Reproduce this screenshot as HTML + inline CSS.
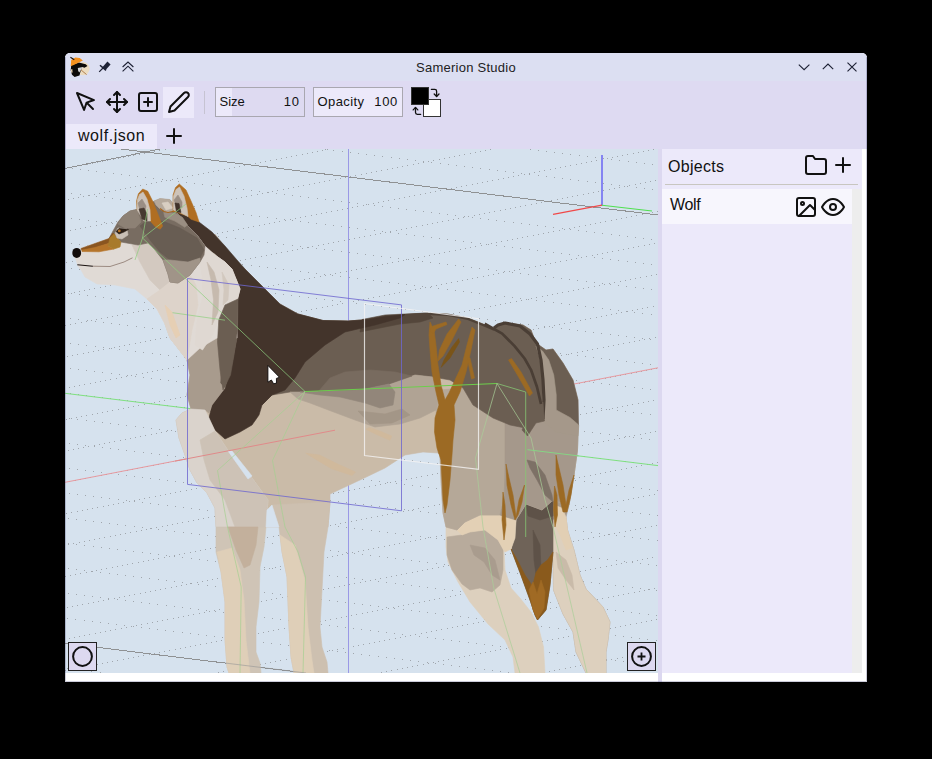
<!DOCTYPE html>
<html><head><meta charset="utf-8">
<style>
html,body{margin:0;padding:0;background:#000;}
body{width:932px;height:759px;position:relative;overflow:hidden;font-family:"Liberation Sans",sans-serif;color:#111;}
#win{position:absolute;left:65px;top:53px;width:802px;height:629px;background:#fff;border-radius:5px 5px 0 0;overflow:hidden;}
#title{position:absolute;left:0;top:0;width:802px;height:28px;background:#dcdff2;}
#tool{position:absolute;left:0;top:28px;width:802px;height:68px;background:#dedaf2;}
#ttext{position:absolute;left:0;width:802px;top:7px;text-align:center;font-size:13px;line-height:15px;color:#222;letter-spacing:0.25px;}
.abs{position:absolute;}
#vp{position:absolute;left:0;top:96px;width:593px;height:524px;background:#d6e2ee;overflow:hidden;}
#vp svg{position:absolute;left:0;top:0;}
#split{position:absolute;left:593px;top:96px;width:4px;height:533px;background:#dcd8f0;}
#panel{position:absolute;left:597px;top:96px;width:200px;height:524px;background:#ece9fa;}
#sbar{position:absolute;left:787px;top:136px;width:10px;height:484px;background:#ededed;}
#row{position:absolute;left:597px;top:136px;width:190px;height:35px;background:#f7f6fd;}
.ic{position:absolute;overflow:visible;}
</style></head><body>
<div id="win">
 <div id="title"></div>
 <div id="ttext">Samerion Studio</div>
 <div id="tool"></div>
 <div class="abs" style="left:98px;top:34px;width:31px;height:31px;background:#ece9fa"></div>
 <div class="abs" style="left:139px;top:38px;width:1px;height:23px;background:#c6c3d2"></div>
 <div class="abs" style="left:150px;top:34px;width:88px;height:28px;border:1px solid #a9a7b0;background:#dedaf1"><div class="abs" style="left:0;top:0;width:16px;height:28px;background:#ece9fa"></div>
   <span class="abs" style="left:3.5px;top:6px;font-size:13px;line-height:15px">Size</span><span class="abs" style="right:4px;top:6px;font-size:13px;line-height:15px;letter-spacing:0.9px">10</span></div>
 <div class="abs" style="left:248px;top:34px;width:88px;height:28px;border:1px solid #a9a7b0;background:#ece9fa">
   <span class="abs" style="left:3.5px;top:6px;font-size:13px;line-height:15px;letter-spacing:0.4px">Opacity</span><span class="abs" style="right:4px;top:6px;font-size:13px;line-height:15px;letter-spacing:0.7px">100</span></div>
 <div class="abs" style="left:358px;top:46px;width:16px;height:16px;border:1px solid #333;background:#fff"></div>
 <div class="abs" style="left:346px;top:34px;width:16px;height:16px;border:1px solid #333;background:#000"></div>
 <div class="abs" style="left:1px;top:71px;width:91px;height:25px;background:#ece9fa"></div>
 <div class="abs" style="left:13px;top:73px;font-size:16px;line-height:20px;letter-spacing:0.55px">wolf.json</div>
 <!-- app icon -->
 <svg class="ic" style="left:4px;top:3px" width="22" height="22" viewBox="69 56 22 22">
  <circle cx="83" cy="68.6" r="6.6" fill="#ecdcc0"/>
  <polygon points="71.2,65.2 78.9,62.6 85.7,64.3 87.5,66 84.5,67.7 82.3,66.9 80.6,71.2 79.5,75.5 74.6,76.9 72,74.8 70.7,70.3" fill="#0c0a08"/>
  <polygon points="70.7,66.2 71.2,60 75.4,57.4 79.7,57.9 82.9,60.6 78.9,62.4 73.7,64.9" fill="#f5921e"/>
  <polygon points="70.9,69.5 72.3,69 72.6,72.5 71.3,72.8" fill="#e8d5b8"/>
  <path d="M70.4 57.2 L74.3 59.7" stroke="#111" stroke-width="1.1"/>
  <polygon points="77.8,68 82.9,67 79.3,72.6 78.2,71" fill="#d4d4d4"/>
  <path d="M81 69.9 L86.6 74.6" stroke="#b08050" stroke-width="1"/>
 </svg>
 <!-- pin -->
 <svg class="ic" style="left:32px;top:6px" width="16" height="16" viewBox="97 59 16 16">
  <g stroke="#1e2235" fill="none" stroke-linecap="butt">
   <path d="M104 68.6 L109 63" stroke-width="4.2"/>
   <path d="M100 65.2 L106 70.4" stroke-width="1.5"/>
   <path d="M103 68 L99.2 71.8" stroke-width="1.2"/>
  </g>
 </svg>
 <!-- double chevron up -->
 <svg class="ic" style="left:56px;top:7px" width="14" height="14" viewBox="121 60 14 14">
  <g stroke="#1e2235" fill="none" stroke-width="1.15"><path d="M122.6 67 L128 62 L133.4 67"/><path d="M122.6 71.3 L128 66.2 L133.4 71.3"/></g>
 </svg>
 <!-- window buttons -->
 <svg class="ic" style="left:731px;top:7px" width="64" height="14" viewBox="796 60 64 14">
  <g stroke="#1e2235" fill="none" stroke-width="1.15"><path d="M798.8 64.6 L804.1 69.6 L809.4 64.6"/><path d="M822.8 69.2 L828 64.1 L833.2 69.2"/><path d="M847.5 62.6 L856.5 71.4 M856.5 62.6 L847.5 71.4"/></g>
 </svg>
 <!-- toolbar icons (24px lucide) -->
 <svg class="ic" style="left:8.5px;top:36.8px" width="24" height="24" viewBox="0 0 24 24" fill="none" stroke="#111" stroke-width="2" stroke-linecap="round" stroke-linejoin="round"><path d="M3 3l7.07 16.97 2.51-7.39 7.39-2.51L3 3z"/><path d="M13 13l6 6"/></svg>
 <svg class="ic" style="left:39.5px;top:36.8px" width="24" height="24" viewBox="0 0 24 24" fill="none" stroke="#111" stroke-width="2" stroke-linecap="round" stroke-linejoin="round"><polyline points="5 9 2 12 5 15"/><polyline points="9 5 12 2 15 5"/><polyline points="15 19 12 22 9 19"/><polyline points="19 9 22 12 19 15"/><line x1="2" y1="12" x2="22" y2="12"/><line x1="12" y1="2" x2="12" y2="22"/></svg>
 <svg class="ic" style="left:70.5px;top:36.8px" width="24" height="24" viewBox="0 0 24 24" fill="none" stroke="#111" stroke-width="2" stroke-linecap="round" stroke-linejoin="round"><rect x="3" y="3" width="18" height="18" rx="2" ry="2"/><line x1="12" y1="8" x2="12" y2="16"/><line x1="8" y1="12" x2="16" y2="12"/></svg>
 <svg class="ic" style="left:101.5px;top:36.8px" width="24" height="24" viewBox="0 0 24 24" fill="none" stroke="#111" stroke-width="2" stroke-linecap="round" stroke-linejoin="round"><path d="M17 3a2.828 2.828 0 1 1 4 4L7.5 20.5 2 22l1.5-5.5L17 3z"/></svg>
 <!-- swap arrows -->
 <svg class="ic" style="left:345px;top:33px" width="32" height="32" viewBox="410 86 32 32" fill="none" stroke="#111" stroke-width="1.3" stroke-linecap="round" stroke-linejoin="round">
  <path d="M431.4 89.4 H434.8 Q436.6 89.4 436.6 91.2 V96.3"/><path d="M434.2 94 L436.6 96.5 L439 94"/>
  <path d="M420.6 114.4 H417.3 Q415.5 114.4 415.5 112.6 V107.6"/><path d="M413.2 109.9 L415.5 107.4 L417.8 109.9"/>
 </svg>
 <!-- tab plus -->
 <svg class="ic" style="left:97px;top:70.5px" width="24" height="24" viewBox="0 0 24 24" fill="none" stroke="#111" stroke-width="2" stroke-linecap="round" stroke-linejoin="round"><line x1="12" y1="5" x2="12" y2="19"/><line x1="5" y1="12" x2="19" y2="12"/></svg>

 <div id="vp">
<svg width="593" height="524" viewBox="65 149 593 524">
<path d="M66 168.5h1m4-1h1m4-1h1m4-1h1m5-1h1m4-1h1m4-1h1m4-1h1m4-1h1m5-1h1m4-1h1m4-1h1m4-1h1m4-1h1m5-1h1m4-1h1m4-1h1m4-1h1m4-1h1m5-1h1M68 199.5h1m4-1h1m4-1h1m4-1h1m5-1h1m4-1h1m4-1h1m4-1h1m4-1h1m5-1h1m4-1h1m4-1h1m4-1h1m4-1h1m4-1h1m5-1h1m4-1h1m4-1h1m4-1h1m4-1h1m5-1h1m4-1h1m4-1h1m4-1h1m4-1h1m5-1h1m4-1h1m4-1h1m4-1h1m4-1h1m5-1h1m4-1h1m4-1h1m4-1h1m4-1h1m5-1h1m4-1h1m4-1h1m4-1h1m4-1h1m5-1h1m4-1h1m4-1h1m4-1h1m4-1h1m5-1h1m4-1h1m4-1h1m4-1h1m4-1h1m4-1h1M70 230.5h1m4-1h1m4-1h1m4-1h1m4-1h1m5-1h1m4-1h1m4-1h1m4-1h1m4-1h1m5-1h1m4-1h1m4-1h1m4-1h1m4-1h1m5-1h1m4-1h1m4-1h1m4-1h1m4-1h1m5-1h1m4-1h1m4-1h1m4-1h1m4-1h1m5-1h1m4-1h1m4-1h1m4-1h1m4-1h1m5-1h1m4-1h1m4-1h1m4-1h1m4-1h1m4-1h1m5-1h1m4-1h1m4-1h1m4-1h1m4-1h1m5-1h1m4-1h1m4-1h1m4-1h1m4-1h1m5-1h1m4-1h1m4-1h1m4-1h1m4-1h1m5-1h1m4-1h1m4-1h1m4-1h1m4-1h1m5-1h1m4-1h1m4-1h1m4-1h1m4-1h1m5-1h1m4-1h1m4-1h1m4-1h1m4-1h1m5-1h1m4-1h1m4-1h1m4-1h1m4-1h1m5-1h1m4-1h1m4-1h1m4-1h1m4-1h1m4-1h1m5-1h1m4-1h1m4-1h1m4-1h1m4-1h1M66 262.5h1m5-1h1m4-1h1m4-1h1m4-1h1m4-1h1m5-1h1m4-1h1m4-1h1m4-1h1m4-1h1m5-1h1m4-1h1m4-1h1m4-1h1m4-1h1m5-1h1m4-1h1m4-1h1m4-1h1m4-1h1m4-1h1m5-1h1m4-1h1m4-1h1m4-1h1m4-1h1m5-1h1m4-1h1m4-1h1m4-1h1m4-1h1m5-1h1m4-1h1m4-1h1m4-1h1m4-1h1m5-1h1m4-1h1m4-1h1m4-1h1m4-1h1m5-1h1m4-1h1m4-1h1m4-1h1m4-1h1m5-1h1m4-1h1m4-1h1m4-1h1m4-1h1m5-1h1m4-1h1m4-1h1m4-1h1m4-1h1m5-1h1m4-1h1m4-1h1m4-1h1m4-1h1m4-1h1m5-1h1m4-1h1m4-1h1m4-1h1m4-1h1m5-1h1m4-1h1m4-1h1m4-1h1m4-1h1m5-1h1m4-1h1m4-1h1m4-1h1m4-1h1m5-1h1m4-1h1m4-1h1m4-1h1m4-1h1m5-1h1m4-1h1m4-1h1m4-1h1m4-1h1m5-1h1m4-1h1m4-1h1m4-1h1m4-1h1m5-1h1m4-1h1m4-1h1m4-1h1m4-1h1m5-1h1m4-1h1m4-1h1m4-1h1m4-1h1m4-1h1m5-1h1m4-1h1m4-1h1m4-1h1m4-1h1m5-1h1m4-1h1m4-1h1m4-1h1m4-1h1M68 293.5h1m5-1h1m4-1h1m4-1h1m4-1h1m4-1h1m5-1h1m4-1h1m4-1h1m4-1h1m4-1h1m4-1h1m5-1h1m4-1h1m4-1h1m4-1h1m4-1h1m5-1h1m4-1h1m4-1h1m4-1h1m4-1h1m5-1h1m4-1h1m4-1h1m4-1h1m4-1h1m5-1h1m4-1h1m4-1h1m4-1h1m4-1h1m5-1h1m4-1h1m4-1h1m4-1h1m4-1h1m5-1h1m4-1h1m4-1h1m4-1h1m4-1h1m5-1h1m4-1h1m4-1h1m4-1h1m4-1h1m4-1h1m5-1h1m4-1h1m4-1h1m4-1h1m4-1h1m5-1h1m4-1h1m4-1h1m4-1h1m4-1h1m5-1h1m4-1h1m4-1h1m4-1h1m4-1h1m5-1h1m4-1h1m4-1h1m4-1h1m4-1h1m5-1h1m4-1h1m4-1h1m4-1h1m4-1h1m5-1h1m4-1h1m4-1h1m4-1h1m4-1h1m5-1h1m4-1h1m4-1h1m4-1h1m4-1h1m5-1h1m4-1h1m4-1h1m4-1h1m4-1h1m4-1h1m5-1h1m4-1h1m4-1h1m4-1h1m4-1h1m5-1h1m4-1h1m4-1h1m4-1h1m4-1h1m5-1h1m4-1h1m4-1h1m4-1h1m4-1h1m5-1h1m4-1h1m4-1h1m4-1h1m4-1h1m5-1h1m4-1h1m4-1h1m4-1h1m4-1h1M65 325.5h1m4-1h1m4-1h1m5-1h1m4-1h1m4-1h1m4-1h1m4-1h1m5-1h1m4-1h1m4-1h1m4-1h1m4-1h1m5-1h1m4-1h1m4-1h1m4-1h1m4-1h1m5-1h1m4-1h1m4-1h1m4-1h1m4-1h1m5-1h1m4-1h1m4-1h1m4-1h1m4-1h1m5-1h1m4-1h1m4-1h1m4-1h1m4-1h1m4-1h1m5-1h1m4-1h1m4-1h1m4-1h1m4-1h1m5-1h1m4-1h1m4-1h1m4-1h1m4-1h1m5-1h1m4-1h1m4-1h1m4-1h1m4-1h1m5-1h1m4-1h1m4-1h1m4-1h1m4-1h1m5-1h1m4-1h1m4-1h1m4-1h1m4-1h1m5-1h1m4-1h1m4-1h1m4-1h1m4-1h1m5-1h1m4-1h1m4-1h1m4-1h1m4-1h1m5-1h1m4-1h1m4-1h1m4-1h1m4-1h1m4-1h1m5-1h1m4-1h1m4-1h1m4-1h1m4-1h1m5-1h1m4-1h1m4-1h1m4-1h1m4-1h1m5-1h1m4-1h1m4-1h1m4-1h1m4-1h1m5-1h1m4-1h1m4-1h1m4-1h1m4-1h1m5-1h1m4-1h1m4-1h1m4-1h1m4-1h1m5-1h1m4-1h1m4-1h1m4-1h1m4-1h1m5-1h1m4-1h1m4-1h1m4-1h1m4-1h1m4-1h1m5-1h1m4-1h1m4-1h1m4-1h1M67 356.5h1m4-1h1m4-1h1m5-1h1m4-1h1m4-1h1m4-1h1m4-1h1m5-1h1m4-1h1m4-1h1m4-1h1m4-1h1m5-1h1m4-1h1m4-1h1m4-1h1m4-1h1m4-1h1m5-1h1m4-1h1m4-1h1m4-1h1m4-1h1m5-1h1m4-1h1m4-1h1m4-1h1m4-1h1m5-1h1m4-1h1m4-1h1m4-1h1m4-1h1m5-1h1m4-1h1m4-1h1m4-1h1m4-1h1m5-1h1m4-1h1m4-1h1m4-1h1m4-1h1m5-1h1m4-1h1m4-1h1m4-1h1m4-1h1m5-1h1m4-1h1m4-1h1m4-1h1m4-1h1m5-1h1m4-1h1m4-1h1m4-1h1m4-1h1m4-1h1m5-1h1m4-1h1m4-1h1m4-1h1m4-1h1m5-1h1m4-1h1m4-1h1m4-1h1m4-1h1m5-1h1m4-1h1m4-1h1m4-1h1m4-1h1m5-1h1m4-1h1m4-1h1m4-1h1m4-1h1m5-1h1m4-1h1m4-1h1m4-1h1m4-1h1m5-1h1m4-1h1m4-1h1m4-1h1m4-1h1m5-1h1m4-1h1m4-1h1m4-1h1m4-1h1m4-1h1m5-1h1m4-1h1m4-1h1m4-1h1m4-1h1m5-1h1m4-1h1m4-1h1m4-1h1m4-1h1m5-1h1m4-1h1m4-1h1m4-1h1m4-1h1m5-1h1m4-1h1m4-1h1M69 387.5h1m4-1h1m4-1h1m4-1h1m5-1h1m4-1h1m4-1h1m4-1h1m4-1h1m5-1h1m4-1h1m4-1h1m4-1h1m4-1h1m5-1h1m4-1h1m4-1h1m4-1h1m4-1h1m5-1h1m4-1h1m4-1h1m4-1h1m4-1h1m5-1h1m4-1h1m4-1h1m4-1h1m4-1h1m5-1h1m4-1h1m4-1h1m4-1h1m4-1h1m5-1h1m4-1h1m4-1h1m4-1h1m4-1h1m5-1h1m4-1h1m4-1h1m4-1h1m4-1h1m4-1h1m5-1h1m4-1h1m4-1h1m4-1h1m4-1h1m5-1h1m4-1h1m4-1h1m4-1h1m4-1h1m5-1h1m4-1h1m4-1h1m4-1h1m4-1h1m5-1h1m4-1h1m4-1h1m4-1h1m4-1h1m5-1h1m4-1h1m4-1h1m4-1h1m4-1h1m5-1h1m4-1h1m4-1h1m4-1h1m4-1h1m5-1h1m4-1h1m4-1h1m4-1h1m4-1h1m4-1h1m5-1h1m4-1h1m4-1h1m4-1h1m4-1h1m5-1h1m4-1h1m4-1h1m4-1h1m4-1h1m5-1h1m4-1h1m4-1h1m4-1h1m4-1h1m5-1h1m4-1h1m4-1h1m4-1h1m4-1h1m5-1h1m4-1h1m4-1h1m4-1h1m4-1h1m5-1h1m4-1h1m4-1h1m4-1h1m4-1h1m5-1h1m4-1h1m4-1h1M66 419.5h1m4-1h1m4-1h1m4-1h1m4-1h1m5-1h1m4-1h1m4-1h1m4-1h1m4-1h1m5-1h1m4-1h1m4-1h1m4-1h1m4-1h1m5-1h1m4-1h1m4-1h1m4-1h1m4-1h1m5-1h1m4-1h1m4-1h1m4-1h1m4-1h1m5-1h1m4-1h1m4-1h1m4-1h1m4-1h1m4-1h1m5-1h1m4-1h1m4-1h1m4-1h1m4-1h1m5-1h1m4-1h1m4-1h1m4-1h1m4-1h1m5-1h1m4-1h1m4-1h1m4-1h1m4-1h1m5-1h1m4-1h1m4-1h1m4-1h1m4-1h1m5-1h1m4-1h1m4-1h1m4-1h1m4-1h1m5-1h1m4-1h1m4-1h1m4-1h1m4-1h1m5-1h1m4-1h1m4-1h1m4-1h1m4-1h1m4-1h1m5-1h1m4-1h1m4-1h1m4-1h1m4-1h1m5-1h1m4-1h1m4-1h1m4-1h1m4-1h1m5-1h1m4-1h1m4-1h1m4-1h1m4-1h1m5-1h1m4-1h1m4-1h1m4-1h1m4-1h1m5-1h1m4-1h1m4-1h1m4-1h1m4-1h1m5-1h1m4-1h1m4-1h1m4-1h1m4-1h1m5-1h1m4-1h1m4-1h1m4-1h1m4-1h1m5-1h1m4-1h1m4-1h1m4-1h1m4-1h1m4-1h1m5-1h1m4-1h1m4-1h1m4-1h1m4-1h1m5-1h1M68 450.5h1m4-1h1m4-1h1m4-1h1m4-1h1m5-1h1m4-1h1m4-1h1m4-1h1m4-1h1m5-1h1m4-1h1m4-1h1m4-1h1m4-1h1m4-1h1m5-1h1m4-1h1m4-1h1m4-1h1m4-1h1m5-1h1m4-1h1m4-1h1m4-1h1m4-1h1m5-1h1m4-1h1m4-1h1m4-1h1m4-1h1m5-1h1m4-1h1m4-1h1m4-1h1m4-1h1m5-1h1m4-1h1m4-1h1m4-1h1m4-1h1m5-1h1m4-1h1m4-1h1m4-1h1m4-1h1m5-1h1m4-1h1m4-1h1m4-1h1m4-1h1m4-1h1m5-1h1m4-1h1m4-1h1m4-1h1m4-1h1m5-1h1m4-1h1m4-1h1m4-1h1m4-1h1m5-1h1m4-1h1m4-1h1m4-1h1m4-1h1m5-1h1m4-1h1m4-1h1m4-1h1m4-1h1m5-1h1m4-1h1m4-1h1m4-1h1m4-1h1m5-1h1m4-1h1m4-1h1m4-1h1m4-1h1m5-1h1m4-1h1m4-1h1m4-1h1m4-1h1m5-1h1m4-1h1m4-1h1m4-1h1m4-1h1m4-1h1m5-1h1m4-1h1m4-1h1m4-1h1m4-1h1m5-1h1m4-1h1m4-1h1m4-1h1m4-1h1m5-1h1m4-1h1m4-1h1m4-1h1m4-1h1m5-1h1m4-1h1m4-1h1m4-1h1m4-1h1m5-1h1M69 481.5h1m5-1h1m4-1h1m4-1h1m4-1h1m4-1h1m5-1h1m4-1h1m4-1h1m4-1h1m4-1h1m5-1h1m4-1h1m4-1h1m4-1h1m4-1h1m5-1h1m4-1h1m4-1h1m4-1h1m4-1h1m5-1h1m4-1h1m4-1h1m4-1h1m4-1h1m5-1h1m4-1h1m4-1h1m4-1h1m4-1h1m5-1h1m4-1h1m4-1h1m4-1h1m4-1h1m4-1h1m5-1h1m4-1h1m4-1h1m4-1h1m4-1h1m5-1h1m4-1h1m4-1h1m4-1h1m4-1h1m5-1h1m4-1h1m4-1h1m4-1h1m4-1h1m5-1h1m4-1h1m4-1h1m4-1h1m4-1h1m5-1h1m4-1h1m4-1h1m4-1h1m4-1h1m5-1h1m4-1h1m4-1h1m4-1h1m4-1h1m5-1h1m4-1h1m4-1h1m4-1h1m4-1h1m5-1h1m4-1h1m4-1h1m4-1h1m4-1h1m4-1h1m5-1h1m4-1h1m4-1h1m4-1h1m4-1h1m5-1h1m4-1h1m4-1h1m4-1h1m4-1h1m5-1h1m4-1h1m4-1h1m4-1h1m4-1h1m5-1h1m4-1h1m4-1h1m4-1h1m4-1h1m5-1h1m4-1h1m4-1h1m4-1h1m4-1h1m5-1h1m4-1h1m4-1h1m4-1h1m4-1h1m5-1h1m4-1h1m4-1h1m4-1h1m4-1h1m4-1h1M66 513.5h1m4-1h1m5-1h1m4-1h1m4-1h1m4-1h1m4-1h1m5-1h1m4-1h1m4-1h1m4-1h1m4-1h1m5-1h1m4-1h1m4-1h1m4-1h1m4-1h1m5-1h1m4-1h1m4-1h1m4-1h1m4-1h1m4-1h1m5-1h1m4-1h1m4-1h1m4-1h1m4-1h1m5-1h1m4-1h1m4-1h1m4-1h1m4-1h1m5-1h1m4-1h1m4-1h1m4-1h1m4-1h1m5-1h1m4-1h1m4-1h1m4-1h1m4-1h1m5-1h1m4-1h1m4-1h1m4-1h1m4-1h1m5-1h1m4-1h1m4-1h1m4-1h1m4-1h1m5-1h1m4-1h1m4-1h1m4-1h1m4-1h1m5-1h1m4-1h1m4-1h1m4-1h1m4-1h1m4-1h1m5-1h1m4-1h1m4-1h1m4-1h1m4-1h1m5-1h1m4-1h1m4-1h1m4-1h1m4-1h1m5-1h1m4-1h1m4-1h1m4-1h1m4-1h1m5-1h1m4-1h1m4-1h1m4-1h1m4-1h1m5-1h1m4-1h1m4-1h1m4-1h1m4-1h1m5-1h1m4-1h1m4-1h1m4-1h1m4-1h1m5-1h1m4-1h1m4-1h1m4-1h1m4-1h1m4-1h1m5-1h1m4-1h1m4-1h1m4-1h1m4-1h1m5-1h1m4-1h1m4-1h1m4-1h1m4-1h1m5-1h1m4-1h1m4-1h1m4-1h1M68 544.5h1m4-1h1m5-1h1m4-1h1m4-1h1m4-1h1m4-1h1m4-1h1m5-1h1m4-1h1m4-1h1m4-1h1m4-1h1m5-1h1m4-1h1m4-1h1m4-1h1m4-1h1m5-1h1m4-1h1m4-1h1m4-1h1m4-1h1m5-1h1m4-1h1m4-1h1m4-1h1m4-1h1m5-1h1m4-1h1m4-1h1m4-1h1m4-1h1m5-1h1m4-1h1m4-1h1m4-1h1m4-1h1m5-1h1m4-1h1m4-1h1m4-1h1m4-1h1m5-1h1m4-1h1m4-1h1m4-1h1m4-1h1m4-1h1m5-1h1m4-1h1m4-1h1m4-1h1m4-1h1m5-1h1m4-1h1m4-1h1m4-1h1m4-1h1m5-1h1m4-1h1m4-1h1m4-1h1m4-1h1m5-1h1m4-1h1m4-1h1m4-1h1m4-1h1m5-1h1m4-1h1m4-1h1m4-1h1m4-1h1m5-1h1m4-1h1m4-1h1m4-1h1m4-1h1m5-1h1m4-1h1m4-1h1m4-1h1m4-1h1m4-1h1m5-1h1m4-1h1m4-1h1m4-1h1m4-1h1m5-1h1m4-1h1m4-1h1m4-1h1m4-1h1m5-1h1m4-1h1m4-1h1m4-1h1m4-1h1m5-1h1m4-1h1m4-1h1m4-1h1m4-1h1m5-1h1m4-1h1m4-1h1m4-1h1m4-1h1m5-1h1m4-1h1m4-1h1m4-1h1M65 576.5h1m4-1h1m4-1h1m4-1h1m5-1h1m4-1h1m4-1h1m4-1h1m4-1h1m5-1h1m4-1h1m4-1h1m4-1h1m4-1h1m5-1h1m4-1h1m4-1h1m4-1h1m4-1h1m5-1h1m4-1h1m4-1h1m4-1h1m4-1h1m5-1h1m4-1h1m4-1h1m4-1h1m4-1h1m4-1h1m5-1h1m4-1h1m4-1h1m4-1h1m4-1h1m5-1h1m4-1h1m4-1h1m4-1h1m4-1h1m5-1h1m4-1h1m4-1h1m4-1h1m4-1h1m5-1h1m4-1h1m4-1h1m4-1h1m4-1h1m5-1h1m4-1h1m4-1h1m4-1h1m4-1h1m5-1h1m4-1h1m4-1h1m4-1h1m4-1h1m5-1h1m4-1h1m4-1h1m4-1h1m4-1h1m5-1h1m4-1h1m4-1h1m4-1h1m4-1h1m4-1h1m5-1h1m4-1h1m4-1h1m4-1h1m4-1h1m5-1h1m4-1h1m4-1h1m4-1h1m4-1h1m5-1h1m4-1h1m4-1h1m4-1h1m4-1h1m5-1h1m4-1h1m4-1h1m4-1h1m4-1h1m5-1h1m4-1h1m4-1h1m4-1h1m4-1h1m5-1h1m4-1h1m4-1h1m4-1h1m4-1h1m5-1h1m4-1h1m4-1h1m4-1h1m4-1h1m4-1h1m5-1h1m4-1h1m4-1h1m4-1h1m4-1h1m5-1h1m4-1h1m4-1h1M67 607.5h1m4-1h1m4-1h1m4-1h1m5-1h1m4-1h1m4-1h1m4-1h1m4-1h1m5-1h1m4-1h1m4-1h1m4-1h1m4-1h1m5-1h1m4-1h1m4-1h1m4-1h1m4-1h1m4-1h1m5-1h1m4-1h1m4-1h1m4-1h1m4-1h1m5-1h1m4-1h1m4-1h1m4-1h1m4-1h1m5-1h1m4-1h1m4-1h1m4-1h1m4-1h1m5-1h1m4-1h1m4-1h1m4-1h1m4-1h1m5-1h1m4-1h1m4-1h1m4-1h1m4-1h1m5-1h1m4-1h1m4-1h1m4-1h1m4-1h1m5-1h1m4-1h1m4-1h1m4-1h1m4-1h1m4-1h1m5-1h1m4-1h1m4-1h1m4-1h1m4-1h1m5-1h1m4-1h1m4-1h1m4-1h1m4-1h1m5-1h1m4-1h1m4-1h1m4-1h1m4-1h1m5-1h1m4-1h1m4-1h1m4-1h1m4-1h1m5-1h1m4-1h1m4-1h1m4-1h1m4-1h1m5-1h1m4-1h1m4-1h1m4-1h1m4-1h1m5-1h1m4-1h1m4-1h1m4-1h1m4-1h1m5-1h1m4-1h1m4-1h1m4-1h1m4-1h1m4-1h1m5-1h1m4-1h1m4-1h1m4-1h1m4-1h1m5-1h1m4-1h1m4-1h1m4-1h1m4-1h1m5-1h1m4-1h1m4-1h1m4-1h1m4-1h1m5-1h1m4-1h1M69 638.5h1m4-1h1m4-1h1m4-1h1m4-1h1m5-1h1m4-1h1m4-1h1m4-1h1m4-1h1m5-1h1m4-1h1m4-1h1m4-1h1m4-1h1m5-1h1m4-1h1m4-1h1m4-1h1m4-1h1m5-1h1m4-1h1m4-1h1m4-1h1m4-1h1m5-1h1m4-1h1m4-1h1m4-1h1m4-1h1m5-1h1m4-1h1m4-1h1m4-1h1m4-1h1m5-1h1m4-1h1m4-1h1m4-1h1m4-1h1m4-1h1m5-1h1m4-1h1m4-1h1m4-1h1m4-1h1m5-1h1m4-1h1m4-1h1m4-1h1m4-1h1m5-1h1m4-1h1m4-1h1m4-1h1m4-1h1m5-1h1m4-1h1m4-1h1m4-1h1m4-1h1m5-1h1m4-1h1m4-1h1m4-1h1m4-1h1m5-1h1m4-1h1m4-1h1m4-1h1m4-1h1m5-1h1m4-1h1m4-1h1m4-1h1m4-1h1m4-1h1m5-1h1m4-1h1m4-1h1m4-1h1m4-1h1m5-1h1m4-1h1m4-1h1m4-1h1m4-1h1m5-1h1m4-1h1m4-1h1m4-1h1m4-1h1m5-1h1m4-1h1m4-1h1m4-1h1m4-1h1m5-1h1m4-1h1m4-1h1m4-1h1m4-1h1m5-1h1m4-1h1m4-1h1m4-1h1m4-1h1m5-1h1m4-1h1m4-1h1m4-1h1m4-1h1m5-1h1m4-1h1M65 670.5h1m5-1h1m4-1h1m4-1h1m4-1h1m4-1h1m5-1h1m4-1h1m4-1h1m4-1h1m4-1h1m5-1h1m4-1h1m4-1h1m4-1h1m4-1h1m5-1h1m4-1h1m4-1h1m4-1h1m4-1h1m5-1h1m4-1h1m4-1h1m4-1h1m4-1h1m4-1h1m5-1h1m4-1h1m4-1h1m4-1h1m4-1h1m5-1h1m4-1h1m4-1h1m4-1h1m4-1h1m5-1h1m4-1h1m4-1h1m4-1h1m4-1h1m5-1h1m4-1h1m4-1h1m4-1h1m4-1h1m5-1h1m4-1h1m4-1h1m4-1h1m4-1h1m5-1h1m4-1h1m4-1h1m4-1h1m4-1h1m5-1h1m4-1h1m4-1h1m4-1h1m4-1h1m5-1h1m4-1h1m4-1h1m4-1h1m4-1h1m4-1h1m5-1h1m4-1h1m4-1h1m4-1h1m4-1h1m5-1h1m4-1h1m4-1h1m4-1h1m4-1h1m5-1h1m4-1h1m4-1h1m4-1h1m4-1h1m5-1h1m4-1h1m4-1h1m4-1h1m4-1h1m5-1h1m4-1h1m4-1h1m4-1h1m4-1h1m5-1h1m4-1h1m4-1h1m4-1h1m4-1h1m5-1h1m4-1h1m4-1h1m4-1h1m4-1h1m4-1h1m5-1h1m4-1h1m4-1h1m4-1h1m4-1h1m5-1h1m4-1h1m4-1h1m4-1h1m4-1h1M218 672.5h1m4-1h1m4-1h1m5-1h1m4-1h1m4-1h1m4-1h1m4-1h1m5-1h1m4-1h1m4-1h1m4-1h1m4-1h1m5-1h1m4-1h1m4-1h1m4-1h1m4-1h1m4-1h1m5-1h1m4-1h1m4-1h1m4-1h1m4-1h1m5-1h1m4-1h1m4-1h1m4-1h1m4-1h1m5-1h1m4-1h1m4-1h1m4-1h1m4-1h1m5-1h1m4-1h1m4-1h1m4-1h1m4-1h1m5-1h1m4-1h1m4-1h1m4-1h1m4-1h1m5-1h1m4-1h1m4-1h1m4-1h1m4-1h1m5-1h1m4-1h1m4-1h1m4-1h1m4-1h1m5-1h1m4-1h1m4-1h1m4-1h1m4-1h1m4-1h1m5-1h1m4-1h1m4-1h1m4-1h1m4-1h1m5-1h1m4-1h1m4-1h1m4-1h1m4-1h1m5-1h1m4-1h1m4-1h1m4-1h1m4-1h1m5-1h1m4-1h1m4-1h1m4-1h1m4-1h1m5-1h1m4-1h1m4-1h1m4-1h1m4-1h1M381 672.5h1m4-1h1m4-1h1m5-1h1m4-1h1m4-1h1m4-1h1m4-1h1m5-1h1m4-1h1m4-1h1m4-1h1m4-1h1m4-1h1m5-1h1m4-1h1m4-1h1m4-1h1m4-1h1m5-1h1m4-1h1m4-1h1m4-1h1m4-1h1m5-1h1m4-1h1m4-1h1m4-1h1m4-1h1m5-1h1m4-1h1m4-1h1m4-1h1m4-1h1m5-1h1m4-1h1m4-1h1m4-1h1m4-1h1m5-1h1m4-1h1m4-1h1m4-1h1m4-1h1m5-1h1m4-1h1m4-1h1m4-1h1m4-1h1m5-1h1m4-1h1m4-1h1m4-1h1m4-1h1M544 672.5h1m4-1h1m4-1h1m4-1h1m5-1h1m4-1h1m4-1h1m4-1h1m4-1h1m5-1h1m4-1h1m4-1h1m4-1h1m4-1h1m5-1h1m4-1h1m4-1h1m4-1h1m4-1h1m5-1h1m4-1h1m4-1h1M530 149.5h1m7 1h1m7 1h1m7 1h1m7 1h1m7 1h1m8 1h1m7 1h1m7 1h1m7 1h1m7 1h1m7 1h1m8 1h1m7 1h1m7 1h1m7 1h1M325 149.5h1m7 1h1m8 1h1m7 1h1m7 1h1m7 1h1m7 1h1m7 1h1m8 1h1m7 1h1m7 1h1m7 1h1m7 1h1m7 1h1m8 1h1m7 1h1m7 1h1m7 1h1m7 1h1m7 1h1m8 1h1m7 1h1m7 1h1m7 1h1m7 1h1m7 1h1m8 1h1m7 1h1m7 1h1m7 1h1m7 1h1m7 1h1m8 1h1m7 1h1m7 1h1m7 1h1m7 1h1m7 1h1m8 1h1m7 1h1m7 1h1M121 149.5h1m7 1h1m7 1h1m7 1h1m8 1h1m7 1h1m7 1h1m7 1h1m7 1h1m7 1h1m8 1h1m7 1h1m7 1h1m7 1h1m7 1h1m7 1h1m8 1h1m7 1h1m7 1h1m7 1h1m7 1h1m7 1h1m8 1h1m7 1h1m7 1h1m7 1h1m7 1h1m7 1h1m8 1h1m7 1h1m7 1h1m7 1h1m7 1h1m7 1h1m8 1h1m7 1h1m7 1h1m7 1h1m7 1h1m7 1h1m7 1h1m8 1h1m7 1h1m7 1h1m7 1h1m7 1h1m7 1h1m8 1h1m7 1h1m7 1h1m7 1h1m7 1h1m7 1h1m8 1h1m7 1h1m7 1h1m7 1h1m7 1h1m7 1h1m8 1h1m7 1h1m7 1h1m7 1h1m7 1h1m7 1h1m8 1h1M72 168.5h1m7 1h1m7 1h1m7 1h1m7 1h1m8 1h1m7 1h1m7 1h1m7 1h1m7 1h1m7 1h1m8 1h1m7 1h1m7 1h1m7 1h1m7 1h1m7 1h1m8 1h1m7 1h1m7 1h1m7 1h1m7 1h1m7 1h1m7 1h1m8 1h1m7 1h1m7 1h1m7 1h1m7 1h1m7 1h1m8 1h1m7 1h1m7 1h1m7 1h1m7 1h1m7 1h1m8 1h1m7 1h1m7 1h1m7 1h1m7 1h1m7 1h1m8 1h1m7 1h1m7 1h1m7 1h1m7 1h1m7 1h1m8 1h1m7 1h1m7 1h1m7 1h1m7 1h1m7 1h1m8 1h1m7 1h1m7 1h1m7 1h1m7 1h1m7 1h1m8 1h1m7 1h1m7 1h1m7 1h1m7 1h1m7 1h1m8 1h1m7 1h1m7 1h1m7 1h1m7 1h1m7 1h1M71 193.5h1m8 1h1m7 1h1m7 1h1m7 1h1m7 1h1m7 1h1m8 1h1m7 1h1m7 1h1m7 1h1m7 1h1m7 1h1m8 1h1m7 1h1m7 1h1m7 1h1m7 1h1m7 1h1m8 1h1m7 1h1m7 1h1m7 1h1m7 1h1m7 1h1m8 1h1m7 1h1m7 1h1m7 1h1m7 1h1m7 1h1m8 1h1m7 1h1m7 1h1m7 1h1m7 1h1m7 1h1m8 1h1m7 1h1m7 1h1m7 1h1m7 1h1m7 1h1m8 1h1m7 1h1m7 1h1m7 1h1m7 1h1m7 1h1m7 1h1m8 1h1m7 1h1m7 1h1m7 1h1m7 1h1m7 1h1m8 1h1m7 1h1m7 1h1m7 1h1m7 1h1m7 1h1m8 1h1m7 1h1m7 1h1m7 1h1m7 1h1m7 1h1m8 1h1m7 1h1m7 1h1m7 1h1M71 218.5h1m7 1h1m8 1h1m7 1h1m7 1h1m7 1h1m7 1h1m7 1h1m8 1h1m7 1h1m7 1h1m7 1h1m7 1h1m7 1h1m8 1h1m7 1h1m7 1h1m7 1h1m7 1h1m7 1h1m8 1h1m7 1h1m7 1h1m7 1h1m7 1h1m7 1h1m7 1h1m8 1h1m7 1h1m7 1h1m7 1h1m7 1h1m7 1h1m8 1h1m7 1h1m7 1h1m7 1h1m7 1h1m7 1h1m8 1h1m7 1h1m7 1h1m7 1h1m7 1h1m7 1h1m8 1h1m7 1h1m7 1h1m7 1h1m7 1h1m7 1h1m8 1h1m7 1h1m7 1h1m7 1h1m7 1h1m7 1h1m8 1h1m7 1h1m7 1h1m7 1h1m7 1h1m7 1h1m8 1h1m7 1h1m7 1h1m7 1h1m7 1h1m7 1h1m8 1h1m7 1h1m7 1h1M71 243.5h1m7 1h1m7 1h1m7 1h1m8 1h1m7 1h1m7 1h1m7 1h1m7 1h1m7 1h1m8 1h1m7 1h1m7 1h1m7 1h1m7 1h1m7 1h1m8 1h1m7 1h1m7 1h1m7 1h1m7 1h1m7 1h1m8 1h1m7 1h1m7 1h1m7 1h1m7 1h1m7 1h1m8 1h1m7 1h1m7 1h1m7 1h1m7 1h1m7 1h1m8 1h1m7 1h1m7 1h1m7 1h1m7 1h1m7 1h1m8 1h1m7 1h1m7 1h1m7 1h1m7 1h1m7 1h1m8 1h1m7 1h1m7 1h1m7 1h1m7 1h1m7 1h1m7 1h1m8 1h1m7 1h1m7 1h1m7 1h1m7 1h1m7 1h1m8 1h1m7 1h1m7 1h1m7 1h1m7 1h1m7 1h1m8 1h1m7 1h1m7 1h1m7 1h1m7 1h1m7 1h1m8 1h1M71 268.5h1m7 1h1m7 1h1m7 1h1m7 1h1m8 1h1m7 1h1m7 1h1m7 1h1m7 1h1m7 1h1m8 1h1m7 1h1m7 1h1m7 1h1m7 1h1m7 1h1m8 1h1m7 1h1m7 1h1m7 1h1m7 1h1m7 1h1m8 1h1m7 1h1m7 1h1m7 1h1m7 1h1m7 1h1m8 1h1m7 1h1m7 1h1m7 1h1m7 1h1m7 1h1m7 1h1m8 1h1m7 1h1m7 1h1m7 1h1m7 1h1m7 1h1m8 1h1m7 1h1m7 1h1m7 1h1m7 1h1m7 1h1m8 1h1m7 1h1m7 1h1m7 1h1m7 1h1m7 1h1m8 1h1m7 1h1m7 1h1m7 1h1m7 1h1m7 1h1m8 1h1m7 1h1m7 1h1m7 1h1m7 1h1m7 1h1m8 1h1m7 1h1m7 1h1m7 1h1m7 1h1m7 1h1M71 293.5h1m7 1h1m7 1h1m7 1h1m7 1h1m7 1h1m7 1h1m8 1h1m7 1h1m7 1h1m7 1h1m7 1h1m7 1h1m8 1h1m7 1h1m7 1h1m7 1h1m7 1h1m7 1h1m8 1h1m7 1h1m7 1h1m7 1h1m7 1h1m7 1h1m8 1h1m7 1h1m7 1h1m7 1h1m7 1h1m7 1h1m8 1h1m7 1h1m7 1h1m7 1h1m7 1h1m7 1h1m8 1h1m7 1h1m7 1h1m7 1h1m7 1h1m7 1h1m8 1h1m7 1h1m7 1h1m7 1h1m7 1h1m7 1h1m8 1h1m7 1h1m7 1h1m7 1h1m7 1h1m7 1h1m7 1h1m8 1h1m7 1h1m7 1h1m7 1h1m7 1h1m7 1h1m8 1h1m7 1h1m7 1h1m7 1h1m7 1h1m7 1h1m8 1h1m7 1h1m7 1h1m7 1h1M70 318.5h1m7 1h1m8 1h1m7 1h1m7 1h1m7 1h1m7 1h1m7 1h1m8 1h1m7 1h1m7 1h1m7 1h1m7 1h1m7 1h1m8 1h1m7 1h1m7 1h1m7 1h1m7 1h1m7 1h1m8 1h1m7 1h1m7 1h1m7 1h1m7 1h1m7 1h1m8 1h1m7 1h1m7 1h1m7 1h1m7 1h1m7 1h1m7 1h1m8 1h1m7 1h1m7 1h1m7 1h1m7 1h1m7 1h1m8 1h1m7 1h1m7 1h1m7 1h1m7 1h1m7 1h1m8 1h1m7 1h1m7 1h1m7 1h1m7 1h1m7 1h1m8 1h1m7 1h1m7 1h1m7 1h1m7 1h1m7 1h1m8 1h1m7 1h1m7 1h1m7 1h1m7 1h1m7 1h1m8 1h1m7 1h1m7 1h1m7 1h1m7 1h1m7 1h1m8 1h1m7 1h1m7 1h1M70 343.5h1m7 1h1m7 1h1m8 1h1m7 1h1m7 1h1m7 1h1m7 1h1m7 1h1m7 1h1m8 1h1m7 1h1m7 1h1m7 1h1m7 1h1m7 1h1m8 1h1m7 1h1m7 1h1m7 1h1m7 1h1m7 1h1m8 1h1m7 1h1m7 1h1m7 1h1m7 1h1m7 1h1m8 1h1m7 1h1m7 1h1m7 1h1m7 1h1m7 1h1m8 1h1m7 1h1m7 1h1m7 1h1m7 1h1m7 1h1m8 1h1m7 1h1m7 1h1m7 1h1m7 1h1m7 1h1m8 1h1m7 1h1m7 1h1m7 1h1m7 1h1m7 1h1m8 1h1m7 1h1m7 1h1m7 1h1m7 1h1m7 1h1m7 1h1m8 1h1m7 1h1m7 1h1m7 1h1m7 1h1m7 1h1m8 1h1m7 1h1m7 1h1m7 1h1m7 1h1m7 1h1m8 1h1M70 368.5h1m7 1h1m7 1h1m7 1h1m7 1h1m8 1h1m7 1h1m7 1h1m7 1h1m7 1h1m7 1h1m8 1h1m7 1h1m7 1h1m7 1h1m7 1h1m7 1h1m8 1h1m7 1h1m7 1h1m7 1h1m7 1h1m7 1h1m8 1h1m7 1h1m7 1h1m7 1h1m7 1h1m7 1h1m8 1h1m7 1h1m7 1h1m7 1h1m7 1h1m7 1h1m8 1h1m7 1h1m7 1h1m7 1h1m7 1h1m7 1h1m7 1h1m8 1h1m7 1h1m7 1h1m7 1h1m7 1h1m7 1h1m8 1h1m7 1h1m7 1h1m7 1h1m7 1h1m7 1h1m8 1h1m7 1h1m7 1h1m7 1h1m7 1h1m7 1h1m8 1h1m7 1h1m7 1h1m7 1h1m7 1h1m7 1h1m8 1h1m7 1h1m7 1h1m7 1h1m7 1h1m7 1h1M70 393.5h1m7 1h1m7 1h1m7 1h1m7 1h1m7 1h1m8 1h1m7 1h1m7 1h1m7 1h1m7 1h1m7 1h1m7 1h1m8 1h1m7 1h1m7 1h1m7 1h1m7 1h1m7 1h1m8 1h1m7 1h1m7 1h1m7 1h1m7 1h1m7 1h1m8 1h1m7 1h1m7 1h1m7 1h1m7 1h1m7 1h1m8 1h1m7 1h1m7 1h1m7 1h1m7 1h1m7 1h1m8 1h1m7 1h1m7 1h1m7 1h1m7 1h1m7 1h1m8 1h1m7 1h1m7 1h1m7 1h1m7 1h1m7 1h1m8 1h1m7 1h1m7 1h1m7 1h1m7 1h1m7 1h1m8 1h1m7 1h1m7 1h1m7 1h1m7 1h1m7 1h1m7 1h1m8 1h1m7 1h1m7 1h1m7 1h1m7 1h1m7 1h1m8 1h1m7 1h1m7 1h1m7 1h1m7 1h1M69 418.5h1m7 1h1m8 1h1m7 1h1m7 1h1m7 1h1m7 1h1m7 1h1m8 1h1m7 1h1m7 1h1m7 1h1m7 1h1m7 1h1m8 1h1m7 1h1m7 1h1m7 1h1m7 1h1m7 1h1m8 1h1m7 1h1m7 1h1m7 1h1m7 1h1m7 1h1m8 1h1m7 1h1m7 1h1m7 1h1m7 1h1m7 1h1m8 1h1m7 1h1m7 1h1m7 1h1m7 1h1m7 1h1m7 1h1m8 1h1m7 1h1m7 1h1m7 1h1m7 1h1m7 1h1m8 1h1m7 1h1m7 1h1m7 1h1m7 1h1m7 1h1m8 1h1m7 1h1m7 1h1m7 1h1m7 1h1m7 1h1m8 1h1m7 1h1m7 1h1m7 1h1m7 1h1m7 1h1m8 1h1m7 1h1m7 1h1m7 1h1m7 1h1m7 1h1m8 1h1m7 1h1m7 1h1m7 1h1M69 443.5h1m7 1h1m7 1h1m8 1h1m7 1h1m7 1h1m7 1h1m7 1h1m7 1h1m8 1h1m7 1h1m7 1h1m7 1h1m7 1h1m7 1h1m7 1h1m8 1h1m7 1h1m7 1h1m7 1h1m7 1h1m7 1h1m8 1h1m7 1h1m7 1h1m7 1h1m7 1h1m7 1h1m8 1h1m7 1h1m7 1h1m7 1h1m7 1h1m7 1h1m8 1h1m7 1h1m7 1h1m7 1h1m7 1h1m7 1h1m8 1h1m7 1h1m7 1h1m7 1h1m7 1h1m7 1h1m8 1h1m7 1h1m7 1h1m7 1h1m7 1h1m7 1h1m8 1h1m7 1h1m7 1h1m7 1h1m7 1h1m7 1h1m8 1h1m7 1h1m7 1h1m7 1h1m7 1h1m7 1h1m7 1h1m8 1h1m7 1h1m7 1h1m7 1h1m7 1h1m7 1h1m8 1h1m7 1h1M69 468.5h1m7 1h1m7 1h1m7 1h1m7 1h1m8 1h1m7 1h1m7 1h1m7 1h1m7 1h1m7 1h1m8 1h1m7 1h1m7 1h1m7 1h1m7 1h1m7 1h1m8 1h1m7 1h1m7 1h1m7 1h1m7 1h1m7 1h1m8 1h1m7 1h1m7 1h1m7 1h1m7 1h1m7 1h1m8 1h1m7 1h1m7 1h1m7 1h1m7 1h1m7 1h1m8 1h1m7 1h1m7 1h1m7 1h1m7 1h1m7 1h1m8 1h1m7 1h1m7 1h1m7 1h1m7 1h1m7 1h1m7 1h1m8 1h1m7 1h1m7 1h1m7 1h1m7 1h1m7 1h1m8 1h1m7 1h1m7 1h1m7 1h1m7 1h1m7 1h1m8 1h1m7 1h1m7 1h1m7 1h1m7 1h1m7 1h1m8 1h1m7 1h1m7 1h1m7 1h1m7 1h1m7 1h1m8 1h1M69 493.5h1m7 1h1m7 1h1m7 1h1m7 1h1m7 1h1m8 1h1m7 1h1m7 1h1m7 1h1m7 1h1m7 1h1m8 1h1m7 1h1m7 1h1m7 1h1m7 1h1m7 1h1m8 1h1m7 1h1m7 1h1m7 1h1m7 1h1m7 1h1m7 1h1m8 1h1m7 1h1m7 1h1m7 1h1m7 1h1m7 1h1m8 1h1m7 1h1m7 1h1m7 1h1m7 1h1m7 1h1m8 1h1m7 1h1m7 1h1m7 1h1m7 1h1m7 1h1m8 1h1m7 1h1m7 1h1m7 1h1m7 1h1m7 1h1m8 1h1m7 1h1m7 1h1m7 1h1m7 1h1m7 1h1m8 1h1m7 1h1m7 1h1m7 1h1m7 1h1m7 1h1m8 1h1m7 1h1m7 1h1m7 1h1m7 1h1m7 1h1m8 1h1m7 1h1m7 1h1m7 1h1m7 1h1m7 1h1M68 518.5h1m7 1h1m8 1h1m7 1h1m7 1h1m7 1h1m7 1h1m7 1h1m8 1h1m7 1h1m7 1h1m7 1h1m7 1h1m7 1h1m8 1h1m7 1h1m7 1h1m7 1h1m7 1h1m7 1h1m8 1h1m7 1h1m7 1h1m7 1h1m7 1h1m7 1h1m8 1h1m7 1h1m7 1h1m7 1h1m7 1h1m7 1h1m8 1h1m7 1h1m7 1h1m7 1h1m7 1h1m7 1h1m8 1h1m7 1h1m7 1h1m7 1h1m7 1h1m7 1h1m7 1h1m8 1h1m7 1h1m7 1h1m7 1h1m7 1h1m7 1h1m8 1h1m7 1h1m7 1h1m7 1h1m7 1h1m7 1h1m8 1h1m7 1h1m7 1h1m7 1h1m7 1h1m7 1h1m8 1h1m7 1h1m7 1h1m7 1h1m7 1h1m7 1h1m8 1h1m7 1h1m7 1h1m7 1h1M68 543.5h1m7 1h1m7 1h1m8 1h1m7 1h1m7 1h1m7 1h1m7 1h1m7 1h1m8 1h1m7 1h1m7 1h1m7 1h1m7 1h1m7 1h1m8 1h1m7 1h1m7 1h1m7 1h1m7 1h1m7 1h1m7 1h1m8 1h1m7 1h1m7 1h1m7 1h1m7 1h1m7 1h1m8 1h1m7 1h1m7 1h1m7 1h1m7 1h1m7 1h1m8 1h1m7 1h1m7 1h1m7 1h1m7 1h1m7 1h1m8 1h1m7 1h1m7 1h1m7 1h1m7 1h1m7 1h1m8 1h1m7 1h1m7 1h1m7 1h1m7 1h1m7 1h1m8 1h1m7 1h1m7 1h1m7 1h1m7 1h1m7 1h1m8 1h1m7 1h1m7 1h1m7 1h1m7 1h1m7 1h1m8 1h1m7 1h1m7 1h1m7 1h1m7 1h1m7 1h1m7 1h1m8 1h1m7 1h1M68 568.5h1m7 1h1m7 1h1m7 1h1m7 1h1m8 1h1m7 1h1m7 1h1m7 1h1m7 1h1m7 1h1m8 1h1m7 1h1m7 1h1m7 1h1m7 1h1m7 1h1m8 1h1m7 1h1m7 1h1m7 1h1m7 1h1m7 1h1m8 1h1m7 1h1m7 1h1m7 1h1m7 1h1m7 1h1m8 1h1m7 1h1m7 1h1m7 1h1m7 1h1m7 1h1m8 1h1m7 1h1m7 1h1m7 1h1m7 1h1m7 1h1m8 1h1m7 1h1m7 1h1m7 1h1m7 1h1m7 1h1m8 1h1m7 1h1m7 1h1m7 1h1m7 1h1m7 1h1m7 1h1m8 1h1m7 1h1m7 1h1m7 1h1m7 1h1m7 1h1m8 1h1m7 1h1m7 1h1m7 1h1m7 1h1m7 1h1m8 1h1m7 1h1m7 1h1m7 1h1m7 1h1m7 1h1m8 1h1M68 593.5h1m7 1h1m7 1h1m7 1h1m7 1h1m7 1h1m8 1h1m7 1h1m7 1h1m7 1h1m7 1h1m7 1h1m8 1h1m7 1h1m7 1h1m7 1h1m7 1h1m7 1h1m8 1h1m7 1h1m7 1h1m7 1h1m7 1h1m7 1h1m8 1h1m7 1h1m7 1h1m7 1h1m7 1h1m7 1h1m7 1h1m8 1h1m7 1h1m7 1h1m7 1h1m7 1h1m7 1h1m8 1h1m7 1h1m7 1h1m7 1h1m7 1h1m7 1h1m8 1h1m7 1h1m7 1h1m7 1h1m7 1h1m7 1h1m8 1h1m7 1h1m7 1h1m7 1h1m7 1h1m7 1h1m8 1h1m7 1h1m7 1h1m7 1h1m7 1h1m7 1h1m8 1h1m7 1h1m7 1h1m7 1h1m7 1h1m7 1h1m8 1h1m7 1h1m7 1h1m7 1h1m7 1h1m7 1h1M67 618.5h1m7 1h1m8 1h1m7 1h1m7 1h1m7 1h1m7 1h1m7 1h1m8 1h1m7 1h1m7 1h1m7 1h1m7 1h1m7 1h1m8 1h1m7 1h1m7 1h1m7 1h1m7 1h1m7 1h1m8 1h1m7 1h1m7 1h1m7 1h1m7 1h1m7 1h1m8 1h1m7 1h1m7 1h1m7 1h1m7 1h1m7 1h1m8 1h1m7 1h1m7 1h1m7 1h1m7 1h1m7 1h1m8 1h1m7 1h1m7 1h1m7 1h1m7 1h1m7 1h1m8 1h1m7 1h1m7 1h1m7 1h1m7 1h1m7 1h1m7 1h1m8 1h1m7 1h1m7 1h1m7 1h1M67 643.5h1m7 1h1m7 1h1m8 1h1m7 1h1m7 1h1m7 1h1m7 1h1m7 1h1m8 1h1m7 1h1m7 1h1m7 1h1m7 1h1m7 1h1m8 1h1m7 1h1m7 1h1m7 1h1m7 1h1m7 1h1m8 1h1m7 1h1m7 1h1m7 1h1m7 1h1m7 1h1m7 1h1m8 1h1m7 1h1M67 668.5h1m7 1h1m7 1h1m7 1h1m8 1h1" stroke="#a0a6ad" stroke-width="1" fill="none" shape-rendering="crispEdges"/>
<g stroke="#8f9193" stroke-width="1" fill="none" shape-rendering="crispEdges"><line x1="65" y1="168.4" x2="160" y2="149"/><line x1="121" y1="149" x2="658" y2="215"/><line x1="65" y1="643.4" x2="306" y2="673"/></g>
<line x1="65" y1="393.3" x2="658" y2="465.6" stroke="#7fe07f" stroke-width="1"/>
<line x1="65" y1="482.3" x2="658" y2="367.8" stroke="#e79aa0" stroke-width="1"/>
<line x1="348.5" y1="149" x2="348.5" y2="673" stroke="#9a98e6" stroke-width="1"/>
<line x1="602" y1="155" x2="602" y2="205.5" stroke="#8484f2" stroke-width="2"/>
<line x1="553" y1="214.3" x2="602" y2="205.2" stroke="#f04848" stroke-width="1.2"/>
<line x1="602" y1="205.2" x2="652" y2="211" stroke="#50e050" stroke-width="1.15"/>
<g stroke-width="0.6" stroke-linejoin="round"><polygon points="550,430 578,425 577.5,450 574,475 569,505 566,517 567.5,530 574,550 580,575 586,589 603,607 610,622 608,640 606,652 606,673 586,673 576,652 573,632 563,614 553.5,590 553,552 552,500" fill="#a89b8d" stroke="#a89b8d"/>
<polygon points="553,520 566,517 567.5,530 574,550 580,575 586,589 603,607 610,622 608,640 606,652 606,673 586,673 576,652 573,632 563,614 553.5,590 553,552" fill="#ddd0be" stroke="#ddd0be"/>
<polygon points="554,505 562,508 566,517 567.5,530 572,548 566,550 560,535 555,525" fill="#e2cfb4" stroke="#e2cfb4"/>
<polygon points="556,552 566,560 572,575 574,590 566,580 558,568" fill="#c9bba9" stroke="#c9bba9"/>
<polygon points="526,504 542,510 553,500 553,552 550,585 546,610 537.5,620 535,615 530,600 520,572.5 511,549 515,538 516,520" fill="#6f6358" stroke="#6f6358"/>
<polygon points="526,504 542,510 553,500 553,516 540,520 528,516" fill="#5e5248" stroke="#5e5248"/>
<polygon points="533,530 540,545 541,570 537,582 534,560" fill="#5e5248" stroke="#5e5248"/>
<polygon points="511,549 516,557.5 525,575 532.5,586 536,572.5 541,565 547.5,560 553,552 550,585 546,610 537.5,620 535,615 530,600 520,572.5" fill="#8a5a1c" stroke="#8a5a1c"/>
<polygon points="529,590 533,582 537,594 541,580 545,592 544,608 537.5,619 533,610" fill="#a06a24" stroke="#a06a24"/>
<polygon points="446,527 446,547 448,562 458,582 470,602 488,624 505,640 513,657 515,673 545,673 543.5,647 538.5,627 531,612 520,598 511,588 505,570 504,550 511,549 516,520 500,515" fill="#ddd0be" stroke="#ddd0be"/>
<polygon points="447,537 462,535 470,532 485,530 498,540 503,550 503,570 500,585 492,592 480,588 470,590 462,584 452,570 447,555" fill="#b8ab9c" stroke="#b8ab9c"/>
<polygon points="470,545 485,548 495,560 500,580 492,575 484,562 474,555" fill="#a99c8e" stroke="#a99c8e"/>
<polygon points="457,530 465,522 480,515 500,515 512,519 516,520 515,538 511,549 505,552 498,540 485,530 470,532 462,535" fill="#e3d0b5" stroke="#e3d0b5"/>
<polygon points="215,234 230,254 245,269 265,289 280,304 298,314 323,320.5 348,321 368,319.5 385,316.5 405,314.5 428,313 448,314 468,318 483,324 495,329 498,325 508,323 523,325 531,330 536,343 546,350 553,349 563,363 573,380 578,400 578,425 577.5,450 574,475 569,505 553,500 542,510 526,504 516,520 500,515 480,515 465,522 457,530 446,527 443,513 441,480 440,455 438,453 423,452 405,455 385,468 360,480 330,494 330,502 328,527 216,527 215,508 207,493 197,483 190,470 185,455 179,438 176,420 182,413 191,409 187,395 190,375 187,360 170,338 165,324" fill="#cabba8" stroke="#cabba8"/>
<polygon points="440,390 463,388 473,405 493,418 510,425 505,470 504,500 500,515 480,515 465,522 457,530 446,527 443,513 441,480 440,455 438,453 436,410" fill="#b5a898" stroke="#b5a898"/>
<polygon points="505,423 528,416 556,411 578.5,424 577.5,450 574,475 569,505 553,500 542,510 526,504 516,520 500,515 504,500 505,470" fill="#a5988b" stroke="#a5988b"/>
<polygon points="262,405 272,395 290,392 305,392 335,391 360,390 389,384 415,375 433,377 450,380 463,388 473,405 493,418 510,425 525,428 528,418 545,418 556,413 578.5,425 578,400 573,380 563,363 553,349 546,350 536,343 531,330 523,325 508,323 498,325 495,329 483,324 468,318 448,314 428,313 405,314.5 385,316.5 368,319.5 348,321 323,320.5 298,314 270,330" fill="#6b5e52" stroke="#6b5e52"/>
<polygon points="536,346 542.5,351 548.75,360 553.75,375 556.25,395 556.25,410 570,417.5 578.75,425 578,436 556,432 544,422 543,400 542.5,375 540,358" fill="#a5988a" stroke="#a5988a"/>
<polyline points="494,328 498,325 505,323 520,326 530,334 537.5,344 541,360 543,380 544,400 543,419" fill="none" stroke="#4a3e35" stroke-width="3.2"/>
<polyline points="405,315.3 428,314 448,315 468,319 483,325 494,329.8" fill="none" stroke="#4f4238" stroke-width="2"/>
<polygon points="527,418 543,402 544.5,421 536,423 527.5,436 522,430" fill="#6b5e52" stroke="#6b5e52"/>
<polygon points="290,392 305,392 335,391 360,390 389,384 415,375 433,377 440,390 436,410 420,418 400,424 375,427 355,420 331,411 310,403 298,399" fill="#b0a394" stroke="#b0a394"/>
<polygon points="358,411 385,414 402,409 410,415 392,423 370,424" fill="#a39687" stroke="#a39687"/>
<polygon points="305.7,453.2 314.3,458.4 331.5,468.7 352.1,475.5 355.5,472.1 336.6,463.5 319.5,455" fill="#d0b99c" stroke="#d0b99c"/>
<polygon points="365.8,429.2 376.1,434.3 389.9,440.3 391.6,436 379.6,430.9 369.3,427.5" fill="#d0b99c" stroke="#d0b99c"/>
<polygon points="330,378 345,372 370,370 395,372 412,376 389,384 360,390 335,391 318,392" fill="#786b5f" stroke="#786b5f"/>
<polygon points="300,392 335,391 360,390 389,384 395,392 393,405 380,408 365,403 340,397 320,395" fill="#92867a" stroke="#92867a"/>
<polygon points="362,319.5 385,315 405,314 428,313 433,318 420,322 400,324 380,328 360,332" fill="#54463b" stroke="#54463b"/>
<polygon points="175,203 180,212 187,216 199,222 212,232 225,246 237,260 245,269 265,289 280,304 298,314 323,320.5 348,321 368,319.5 385,316.5 405,314.5 400,318 375,325 345,332 325,345 305,362 295,378 285,390 272,395 262,405 259,415 252,425 240,432 225,439 215,430 209,418 212,405 225,388 232,363 237,338 237,300 240,289 236,279 232,269 225,262 215,255 205,246 197,235 187,225 176,212" fill="#43342b" stroke="#43342b"/>
<polygon points="217,338 237,338 232,363 225,388 220,383 221,363" fill="#6b5e52" stroke="#6b5e52"/>
<polygon points="205,249 215,254 225,267 236,279 240,289 237,300 237,338 217,338 221,363 220,383 225,388 212,405 209,413 205,410 191,409 187,395 190,375 187,360 200,348 215,338 222,318 226,300 224,282 215,266 207,256" fill="#a89b8d" stroke="#a89b8d"/>
<polygon points="191,409 205,410 209,418 215,431 229,452 252,478 268,500 266,527 216,527 215,508 207,493 197,483 190,470 185,455 179,438 176,420 182,413" fill="#dad3cc" stroke="#dad3cc"/>
<polygon points="200,440 215,431 229,452 252,478 268,500 266,527 235,527 225,500 210,480 204,460" fill="#cdc2b6" stroke="#cdc2b6"/>
<polygon points="228,451 232,451 252,476 248,479" fill="#d6e2ee" stroke="#d6e2ee"/>
<polygon points="216,527 266,527 264,547 260,567 259,602 256,627 256,652 260,663 261,673 229,673 227,667 225,640 225,602 221,572 216,552" fill="#cfc4b6" stroke="#cfc4b6"/>
<polygon points="217,552 221,572 225,602 225,640 227,667 229,673 250,673 246,640 244,600 240,570 232,548" fill="#dfcfb8" stroke="#dfcfb8"/>
<polygon points="228,527 258,527 256,545 250,565 244,568 236,550" fill="#c3b09c" stroke="#c3b09c"/>
<polygon points="272,505 330,502 328,527 324,552 322,590 320,627 322,647 327,662 328,673 294,673 291,657 289,627 287,577 282,552 279,527" fill="#cdc0b0" stroke="#cdc0b0"/>
<polygon points="280,535 295,545 305,580 308,627 312,660 314,673 294,673 291,657 289,627 287,577 282,552" fill="#dfcfb8" stroke="#dfcfb8"/>
<polygon points="267,510 272,505 279,527 266,527" fill="#d6e2ee" stroke="#d6e2ee"/>
<polygon points="430,322 434,330 436,345 438,365 441,385 445,400 449,393 455,380 462,365 467,345 472,327 475,330 471,350 466,372 460,392 454,405 455,420 453,440 452,455 450,480 447,505 445,513 443,500 442,480 441,460 437,448 434.5,432 435,418 439,405 436,392 432,372 430,350 429,335" fill="#9c6a24" stroke="#9c6a24"/>
<polygon points="429.5,330 433,326 446,322 447,324.5 436,329 433,334" fill="#9c6a24" stroke="#9c6a24"/>
<polygon points="458.6,319 461,322 452,340 443,356 438,361 439.5,350 447,334" fill="#9c6a24" stroke="#9c6a24"/>
<polygon points="458.6,338.6 459.5,342 450,358 441.2,367.3 444,360 452,347" fill="#7a5418" stroke="#7a5418"/>
<polygon points="467,357 470,358 474.5,378 471.5,379" fill="#9c6a24" stroke="#9c6a24"/>
<polygon points="508.5,360 511.5,358.5 521,372 532.5,393 529.5,396 518,376" fill="#9c6a24" stroke="#9c6a24"/>
<polyline points="484.7,323.7 502.2,333.6 514.6,346.1 524.6,358.5 531,369.8 537,387 541,404" fill="none" stroke="#4a3e35" stroke-width="2.7"/>
<polygon points="506,464 509,478 513,495 516,517 519,500 524.5,485 522,502 518,515 515,520 511,505 507,485" fill="#9c6a24" stroke="#9c6a24"/>
<polygon points="503,492 505,505 506,525 504,540 502,520" fill="#9c6a24" stroke="#9c6a24"/>
<polygon points="556,455 559,468 563,485 566,505 569,490 574,475 571,495 567,512 563,512 559,495 556,475" fill="#9c6a24" stroke="#9c6a24"/>
<polygon points="554.5,486 557,495 557.5,515 555,527 553.5,510" fill="#9c6a24" stroke="#9c6a24"/>
<polygon points="527,460 535,462 545,475 552,495 553,502 545,495 537,480 530,468" fill="#7d7166" stroke="#7d7166"/>
<polygon points="72.5,253 81,248 109,238.5 113,231 118,222 123,216 130,211 137,209.5 150,203 160,199 170,200 174,206 176,212 187,225 197,235 205,246 215,255 225,262 232,269 236,279 240,289 237,300 237,338 217,338 200,348 187,360 170,338 165,324 157,309 147,299 135,289 115,285 97,284 85,277 81,270 78,266 76,260" fill="#e0dad5" stroke="#e0dad5"/>
<polygon points="132,245 148,243 155,250 163,260 168,274 170,282 160,290 150,280 140,262" fill="#d3c9c0" stroke="#d3c9c0"/>
<polygon points="147,299 160,290 170,282 178,283 190,275 196,285 198,305 192,330 187,360 170,338 165,324 157,309" fill="#ddd3ca" stroke="#ddd3ca"/>
<polygon points="165,305 172,312 180,335 176,338 170,325" fill="#e6cfb4" stroke="#e6cfb4"/>
<polygon points="200,262 205,249 215,255 225,262 232,269 236,279 240,289 237.5,300 225,305 218.75,320 212.5,335 202.5,350 195,345 197,320 203,295 202,275" fill="#dfd8d2" stroke="#dfd8d2"/>
<polygon points="207,262 214,272 219,290 218,312 212,325 213.5,300 211,280" fill="#c6baae" stroke="#c6baae"/>
<polygon points="222,272 229,285 228,300 223,305 224,290" fill="#d2c8be" stroke="#d2c8be"/>
<polygon points="225,305 238,299 237.5,330 234,355 230.5,375 223,390 220,370 217.5,342.5 218.75,320" fill="#6b5e52" stroke="#6b5e52"/>
<polygon points="109,238.5 113,231 118,222 123,216 130,211 137,209.5 150,203 160,199 170,200 174,206 176,212 187,225 197,235 205,246 204,255 200,262 190,275 178,283 170,282 168,274 163,260 155,250 148,243 138,245 121,242 117,238" fill="#786c61" stroke="#786c61"/>
<polygon points="140,226 150,218 165,222 180,228 197,238 204,250 200,258 188,262 170,260 160,252 150,240" fill="#685d53" stroke="#685d53"/>
<polygon points="163,260 170,260 188,262 200,258 200,262 190,275 178,283 170,282 168,274" fill="#a09488" stroke="#a09488"/>
<polygon points="118,224 123,216 130,211 137,209.5 141,222 135,228 125,228" fill="#8d8175" stroke="#8d8175"/>
<polygon points="163.7,212.4 174.9,213 182.4,217.3 187.4,224.8 184.9,227.3 174.9,221.1 164.9,217.3" fill="#9a8e82" stroke="#9a8e82"/>
<polygon points="154,201 160,198.5 170,199.5 174,205 175,211 167,212.5 160,209 156,205" fill="#b5a99c" stroke="#b5a99c"/>
<polygon points="162,203 168,202 173,208 166,210" fill="#d8cec2" stroke="#d8cec2"/>
<polyline points="160,208.5 164,211.5 168,212.5 175,211" fill="none" stroke="#a8671f" stroke-width="1.2"/>
<polygon points="81,248.5 109,238.5 113,233 117,238 110,243 95,248 82,250.5" fill="#8a5520" stroke="#8a5520"/>
<polygon points="82,250 95,247.5 110,243 108,246 114,249 99,251.8 82,251.5" fill="#b5742a" stroke="#b5742a"/>
<polygon points="110,238 114,234 121,242 120,247 114,249 108,246" fill="#a87a2c" stroke="#a87a2c"/>
<polygon points="115,233 118,228 127,229 128,235 122,239 117,238" fill="#c9bfb5" stroke="#c9bfb5"/>
<polygon points="116,231.5 119,228.5 125,229 128.5,229.5 124,232 119,234" fill="#2a1e16" stroke="#2a1e16"/>
<ellipse cx="119.3" cy="230.9" rx="1.4" ry="1.4" fill="#b5742a"/>
<polygon points="137,210 136.5,201 138.4,193.7 142.7,189 147.7,191.2 152.7,201.2 157.7,213.6 162.6,226 160.2,229.2 155.2,226.7 150.2,221 147,212" fill="#b06e22" stroke="#b06e22"/>
<polygon points="137.2,210 137.3,200 139.5,194.5 143,192 147,199 150,210 150.5,221 144,221" fill="#cdc3b9" stroke="#cdc3b9"/>
<polygon points="138,203 142,199 146,206 145,212 140,211" fill="#9a8e84" stroke="#9a8e84"/>
<polygon points="139,209 144,208 147,214 147,221 142,219" fill="#463930" stroke="#463930"/>
<polygon points="173,211 173,195 175.5,187.5 179.3,184 186,190 191,201 196,212.4 199,222 191,219.2 187.4,216" fill="#b06e22" stroke="#b06e22"/>
<polygon points="173.3,210 173.5,196 176,189.5 179.5,187 184,196 187,208 188,216.5 181,213" fill="#cdc3b9" stroke="#cdc3b9"/>
<polygon points="174,200 178,195 182,202 182,208 176,206" fill="#9a8e84" stroke="#9a8e84"/>
<polygon points="175,203 179,203.5 181,212.5 176.5,212" fill="#3f322a" stroke="#3f322a"/>
<ellipse cx="76.7" cy="252.9" rx="4.4" ry="5" fill="#120c0a"/>
<polyline points="77.3,264.7 92.9,266.2" fill="none" stroke="#1a1210" stroke-width="1.1"/>
<polyline points="92.9,266.2 110,266.5 124,262 132.5,257.8" fill="none" stroke="#8a766c" stroke-width="0.8"/></g>
<!-- red axis visible over pale chest -->
<line x1="175" y1="461.1" x2="335" y2="430.2" stroke="#e08a8a" stroke-width="1"/>
<!-- spine green -->
<polyline points="305,391.5 497,383.5" fill="none" stroke="#6ccf4c" stroke-width="1.2"/>
<polyline points="497,383.5 525.7,392 525.7,537" fill="none" stroke="#86c774" stroke-width="0.8"/>
<polyline points="497,383.5 475.5,458 483,527 494,589 520,673" fill="none" stroke="#a9cf98" stroke-width="0.7"/>
<polyline points="497,383.5 531,438 545,500 553,527 587,673" fill="none" stroke="#a9cf98" stroke-width="0.7"/>
<line x1="527.5" y1="449.7" x2="578.5" y2="455.9" stroke="#86d484" stroke-width="1"/>
<g fill="none" stroke="#8fcf80" stroke-width="0.8" stroke-opacity="0.9">
<polyline points="147.5,209 142.5,238 135,260"/><polyline points="186,204 142.5,238 305,391.5"/><polyline points="172.5,312.7 225,320.2"/>
</g>
<g fill="none" stroke="#a5d090" stroke-width="0.7">
<polyline points="305,391.5 217.5,470.5 227.5,527 241.2,587 240,673"/><polyline points="305,391.5 272.5,460.5 285,527 298,552 305.5,577 303,673"/>
</g>
<!-- selection quads -->
<polygon points="187.5,278.5 401.5,304.9 401.5,510.8 187.5,484.4" fill="none" stroke="#6e66d0" stroke-width="1" stroke-opacity="0.82"/>
<polygon points="364.5,303.5 478.5,318.8 478.5,469.3 364.5,455.5" fill="none" stroke="#f4f3f2" stroke-width="1.15" stroke-opacity="0.8"/>
<!-- blue axis over lower body bg -->
<line x1="225" y1="663" x2="306" y2="673" stroke="#8f9193" stroke-width="1" stroke-opacity="0.55"/>
<!-- buttons -->
<rect x="68.5" y="642.5" width="28" height="28" fill="#ddd9f0" stroke="#222" stroke-width="1"/>
<circle cx="82.5" cy="656.5" r="9.4" fill="none" stroke="#111" stroke-width="2"/>
<rect x="627.5" y="642.5" width="28" height="28" fill="#ddd9f0" stroke="#222" stroke-width="1"/>
<circle cx="641.5" cy="656.5" r="9.4" fill="none" stroke="#111" stroke-width="2"/>
<path d="M637.5 656.5h8M641.5 652.5v8" stroke="#111" stroke-width="1.8" fill="none"/>
<!-- cursor -->
<path d="M267.9 365.4 L267.9 382.2 L271.4 380 L273.6 383.8 L276.5 383.1 L276.4 378.4 L279.5 377.3 Z" fill="#fff" stroke="#0c0a0a" stroke-width="0.9" stroke-linejoin="round"/>

</svg> </div>
 <div id="split"></div>
 <div id="panel"></div>
 <div id="row"></div>
 <div id="sbar"></div>
 <div class="abs" style="left:603px;top:104px;font-size:16px;line-height:20px;letter-spacing:0.3px">Objects</div>
 <div class="abs" style="left:600px;top:131px;width:193px;height:1px;background:#c8c6c0"></div>
 <div class="abs" style="left:605px;top:142px;font-size:16px;line-height:20px;letter-spacing:-0.3px">Wolf</div>
 <svg class="ic" style="left:739px;top:100px" width="24" height="24" viewBox="0 0 24 24" fill="none" stroke="#111" stroke-width="2" stroke-linecap="round" stroke-linejoin="round"><path d="M22 19a2 2 0 0 1-2 2H4a2 2 0 0 1-2-2V5a2 2 0 0 1 2-2h5l2 3h9a2 2 0 0 1 2 2z"/></svg>
 <svg class="ic" style="left:765.5px;top:100px" width="24" height="24" viewBox="0 0 24 24" fill="none" stroke="#111" stroke-width="2" stroke-linecap="round" stroke-linejoin="round"><line x1="12" y1="5" x2="12" y2="19"/><line x1="5" y1="12" x2="19" y2="12"/></svg>
 <svg class="ic" style="left:729px;top:141.5px" width="24" height="24" viewBox="0 0 24 24" fill="none" stroke="#111" stroke-width="2" stroke-linecap="round" stroke-linejoin="round"><rect x="3" y="3" width="18" height="18" rx="2" ry="2"/><circle cx="8.5" cy="8.5" r="1.5"/><polyline points="21 15 16 10 5 21"/></svg>
 <svg class="ic" style="left:755.5px;top:141.5px" width="24" height="24" viewBox="0 0 24 24" fill="none" stroke="#111" stroke-width="2" stroke-linecap="round" stroke-linejoin="round"><path d="M1 12s4-8 11-8 11 8 11 8-4 8-11 8-11-8-11-8z"/><circle cx="12" cy="12" r="3"/></svg>
<div id="wborder" class="abs" style="left:0;top:4px;width:800px;height:624px;border:1px solid rgba(70,70,120,0.28);border-top:none;pointer-events:none"></div>
</div>
</body></html>
